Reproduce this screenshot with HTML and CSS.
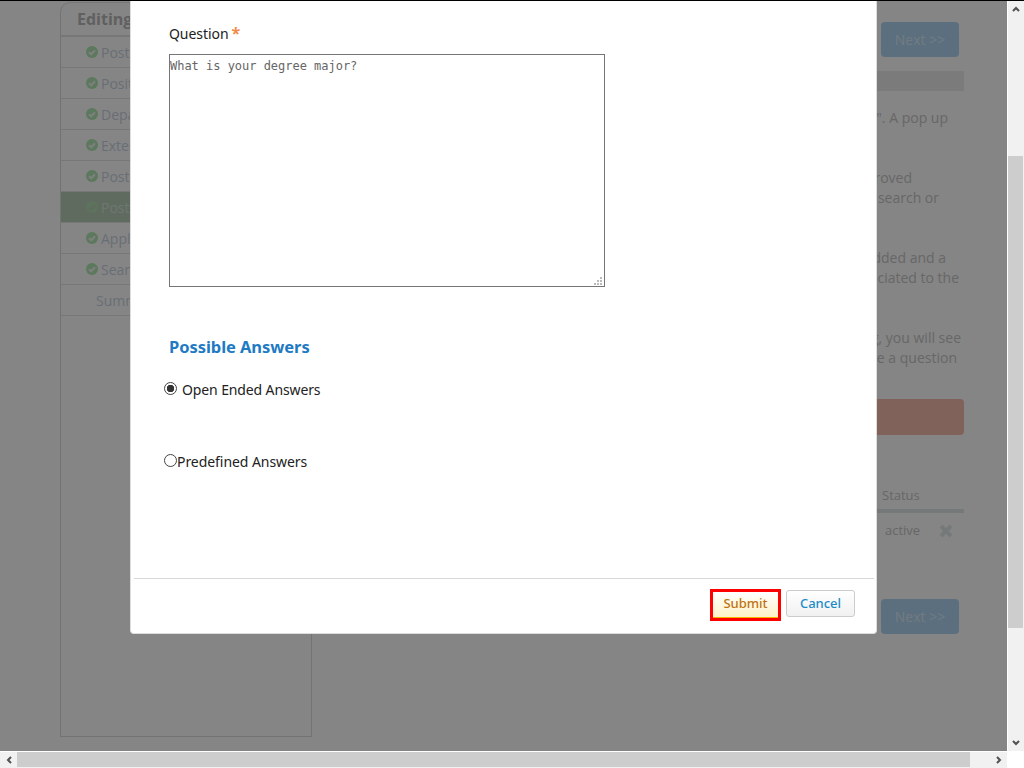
FILE: index.html
```html
<!DOCTYPE html>
<html lang="en">
<head>
<meta charset="utf-8">
<title>Posting Questions</title>
<link rel="stylesheet" href="styles.css">
</head>
<body>
<div class="window">
  <div class="viewport">
    <div class="page">
      <div class="backdrop-content">
        <aside class="sidebar">
          <div class="side-head">Editing Job</div>
          <div class="side-row"><svg class="check" viewBox="0 0 12 12"><circle cx="6" cy="6" r="6"/><path d="M3 6.2 5.2 8.3 9 4.2"/></svg>Posting</div>
          <div class="side-row"><svg class="check" viewBox="0 0 12 12"><circle cx="6" cy="6" r="6"/><path d="M3 6.2 5.2 8.3 9 4.2"/></svg>Position</div>
          <div class="side-row"><svg class="check" viewBox="0 0 12 12"><circle cx="6" cy="6" r="6"/><path d="M3 6.2 5.2 8.3 9 4.2"/></svg>Department</div>
          <div class="side-row"><svg class="check" viewBox="0 0 12 12"><circle cx="6" cy="6" r="6"/><path d="M3 6.2 5.2 8.3 9 4.2"/></svg>External</div>
          <div class="side-row"><svg class="check" viewBox="0 0 12 12"><circle cx="6" cy="6" r="6"/><path d="M3 6.2 5.2 8.3 9 4.2"/></svg>Posting</div>
          <div class="side-row side-active"><svg class="check" viewBox="0 0 12 12"><circle cx="6" cy="6" r="6"/><path d="M3 6.2 5.2 8.3 9 4.2"/></svg>Posting</div>
          <div class="side-row"><svg class="check" viewBox="0 0 12 12"><circle cx="6" cy="6" r="6"/><path d="M3 6.2 5.2 8.3 9 4.2"/></svg>Applicant</div>
          <div class="side-row"><svg class="check" viewBox="0 0 12 12"><circle cx="6" cy="6" r="6"/><path d="M3 6.2 5.2 8.3 9 4.2"/></svg>Search</div>
          <div class="side-row side-plain">Summary</div>
        </aside>
        <main class="main">
          <div class="next-row"><span class="next">Next &gt;&gt;</span></div>
          <div class="bar"></div>
          <div class="para first">
            <div class="line end-948">". A pop up</div>
          </div>
          <div class="para">
            <div class="line end-912">roved</div>
            <div class="line end-939">search or</div>
          </div>
          <div class="para">
            <div class="line end-946">added and a</div>
            <div class="line end-959">associated to the</div>
          </div>
          <div class="para">
            <div class="line end-961">g, you will see</div>
            <div class="line end-957">e a question</div>
          </div>
          <div class="alert"></div>
          <div class="table-head"><span>Status</span></div>
          <div class="table-row"><span>active</span><svg class="del" viewBox="0 0 14 14"><path d="M2 2 12 12M12 2 2 12"/></svg></div>
          <div class="next-row next-bottom"><span class="next">Next &gt;&gt;</span></div>
        </main>
      </div>
      <div class="overlay"></div>
      <section class="modal">
        <div class="modal-body">
          <label class="q-label" for="q"><span>Question</span><span class="req">*</span></label>
          <div class="q-wrap">
            <textarea class="q-input" id="q">What is your degree major?</textarea>
            <svg class="grip" viewBox="0 0 8 8"><path d="M6 0h2v2H6zM3 3h2v2H3zM6 3h2v2H6zM0 6h2v2H0zM3 6h2v2H3zM6 6h2v2H6z"/></svg>
          </div>
          <h2 class="answers">Possible Answers</h2>
          <label class="opt opt-open"><input class="radio" type="radio" name="a" checked><span class="opt-gap">Open Ended Answers</span></label>
          <label class="opt opt-pre"><input class="radio" type="radio" name="a"><span>Predefined Answers</span></label>
        </div>
        <div class="modal-foot">
          <button class="btn btn-submit" type="button">Submit</button>
          <button class="btn btn-cancel" type="button">Cancel</button>
        </div>
      </section>
    </div>
    <div class="vscroll">
      <div class="arrow-box"><svg class="arrow" viewBox="0 0 8 6"><path d="M1 5 4 2 7 5"/></svg></div>
      <div class="vtrack"><div class="vthumb"></div></div>
      <div class="arrow-box"><svg class="arrow" viewBox="0 0 8 6"><path d="M1 1 4 4 7 1"/></svg></div>
    </div>
  </div>
  <div class="hscroll">
    <div class="arrow-box-h"><svg class="arrow-h" viewBox="0 0 6 8"><path d="M5 1 2 4 5 7"/></svg></div>
    <div class="htrack"><div class="hthumb"></div></div>
    <div class="arrow-box-h"><svg class="arrow-h" viewBox="0 0 6 8"><path d="M1 1 4 4 1 7"/></svg></div>
    <div class="corner"></div>
  </div>
</div>
</body>
</html>
```
FILE: styles.css
```css
* { box-sizing: border-box; }
html, body { margin: 0; height: 100%; overflow: hidden; }
body { font-family: "Open Sans", "Liberation Sans", sans-serif; background: #fff; }

.window { width: 1024px; height: 768px; display: flex; flex-direction: column; border-top: 1px solid #000; }
.viewport { flex: 1; display: flex; min-height: 0; }
.page { width: 1007px; position: relative; overflow: hidden; background: #fff; }
.backdrop-content { display: flex; gap: 15px; padding: 1px 0 0 60px; height: 100%; }

.sidebar { width: 252px; height: 735px; border: 1px solid #dcdcdc; border-top: 0; border-radius: 10px 0 0 0; flex: none; }
.side-head { height: 35px; padding: 5px 0 0 16px; font-size: 16px; line-height: 22px; font-weight: 700; color: #b8b8b8; border: 1px solid #e4e4e4; border-width: 1px 0 2px; border-radius: 10px 0 0 0; white-space: nowrap; }
.side-row { height: 31px; display: flex; align-items: center; gap: 3px; padding-left: 25px; font-size: 14px; color: #c8d4e0; border-bottom: 1px solid #e4e4e4; white-space: nowrap; }
.side-active { background: #b7ceb7; color: #d4e2d6; }
.side-plain { padding-left: 35px; }
.check { width: 12px; height: 12px; flex: none; }
.check circle { fill: #b0e8b2; }
.check path { fill: none; stroke: #f4f4f4; stroke-width: 2; }
.side-active .check circle { fill: #b2dcb2; }
.side-active .check path { stroke: #b7ceb7; }

.main { width: 637px; flex: none; font-size: 14px; color: #c6c6c6; }
.next-row { display: flex; justify-content: flex-end; padding: 20px 5px 0 0; }
.next { width: 78px; height: 35px; border-radius: 4px; background: #afd5f2; color: #dcecf8; display: flex; align-items: center; justify-content: center; font-size: 14px; }
.bar { height: 20px; margin-top: 14px; background: #ececec; }
.para { margin-top: 40px; }
.para.first { margin-top: 17px; }
.line { line-height: 20px; text-align: right; white-space: nowrap; }
.end-948 { padding-right: 16px; }
.end-912 { padding-right: 52px; }
.end-939 { padding-right: 25px; }
.end-946 { padding-right: 18px; }
.end-959 { padding-right: 5px; }
.end-961 { padding-right: 3px; }
.end-957 { padding-right: 7px; }
.alert { height: 36px; margin-top: 31px; border-radius: 4px; background: #f6bdad; }
.table-head { margin-top: 50px; height: 28px; border-bottom: 4px solid #e2e8e8; padding-left: 555px; font-size: 13px; line-height: 20px; }
.table-row { display: flex; align-items: center; height: 34px; padding-left: 558px; font-size: 13px; }
.del { width: 14px; height: 14px; margin: 2px 0 0 19px; }
.del path { fill: none; stroke: #e2e8e8; stroke-width: 4; }
.next-bottom { padding-top: 52px; }

.overlay { position: absolute; inset: 0; background: rgba(0, 0, 0, .48); }
.modal { position: absolute; left: 130px; top: 0; width: 747px; height: 633px; background: #fff; border: 1px solid #ddd; border-width: 0 1px 1px; border-radius: 0 0 4px 4px; display: flex; flex-direction: column; color: #222; font-family: "Noto Sans", sans-serif; letter-spacing: -.06px; }
.modal-body { flex: 1; padding: 23px 0 0 38px; }
.q-label { display: flex; gap: 3px; font-size: 14px; line-height: 20px; }
.req { color: #ef8c4a; font-size: 16px; line-height: 18px; font-weight: 700; }
.q-wrap { position: relative; width: 436px; height: 233px; margin-top: 10px; }
.q-input { display: block; width: 100%; height: 100%; margin: 0; padding: 4px 0 0; border: 1px solid #767676; border-radius: 0; background: #fff; font-family: "DejaVu Sans Mono", monospace; font-size: 12px; line-height: 15px; color: #666; outline: 0; resize: none; letter-spacing: -.02px; }
.grip { position: absolute; right: 3px; bottom: 2px; width: 8px; height: 8px; fill: #bbb; }
.answers { margin: 48px 0 0; font-size: 16.5px; line-height: 24px; font-weight: 700; color: #1f7ac4; }
.opt { display: flex; align-items: center; font-size: 14px; line-height: 20px; margin-left: -5px; white-space: pre; }
.opt-open { margin-top: 21px; }
.opt-pre { margin-top: 52px; }
.opt-gap { margin-left: 5px; letter-spacing: -.12px; }
.radio { appearance: none; width: 13px; height: 13px; margin: 0 0 3px; border: 1px solid #444; border-radius: 50%; background: #fff; flex: none; }
.radio:checked { background: radial-gradient(circle, #333 0 3.5px, #fff 4px); }
.modal-foot { height: 55px; margin: 0 2px 0 3px; border-top: 1px solid #d8d8d8; display: flex; justify-content: flex-end; align-items: flex-start; gap: 5px; padding: 10px 19px 0 0; }
.btn { font-family: "Noto Sans", sans-serif; font-size: 13px; font-weight: 500; cursor: pointer; }
.btn-submit { width: 71px; height: 32px; border: 3px solid #f00; background: linear-gradient(#fff, #fdf2c6); box-shadow: inset 0 -1px 0 #f7b500; color: #bf730f; padding: 0 0 5px; }
.btn-cancel { width: 69px; height: 27px; margin-top: 1px; border: 1px solid #ccc; border-radius: 3px; background: linear-gradient(#fff, #f1f1f1); color: #1c8cc8; padding: 0 0 2px; }

.vscroll { width: 17px; border-left: 1px solid #fff; background: #f1f1f1; display: flex; flex-direction: column; }
.arrow-box { height: 16px; display: flex; align-items: center; justify-content: center; padding-right: 1px; }
.arrow { width: 8px; height: 6px; }
.arrow path, .arrow-h path { fill: none; stroke: #505050; stroke-width: 2; }
.vtrack { flex: 1; padding-top: 139px; }
.vthumb { height: 472px; width: 15px; background: #cdcdcd; }
.hscroll { height: 17px; display: flex; border-top: 1px solid #fff; background: #f1f1f1; }
.arrow-box-h { width: 17px; display: flex; align-items: center; justify-content: center; }
.arrow-h { width: 6px; height: 8px; }
.htrack { flex: 1; }
.hthumb { width: 953px; height: 15px; background: #cdcdcd; }
.corner { width: 17px; background: #fff; }
```
